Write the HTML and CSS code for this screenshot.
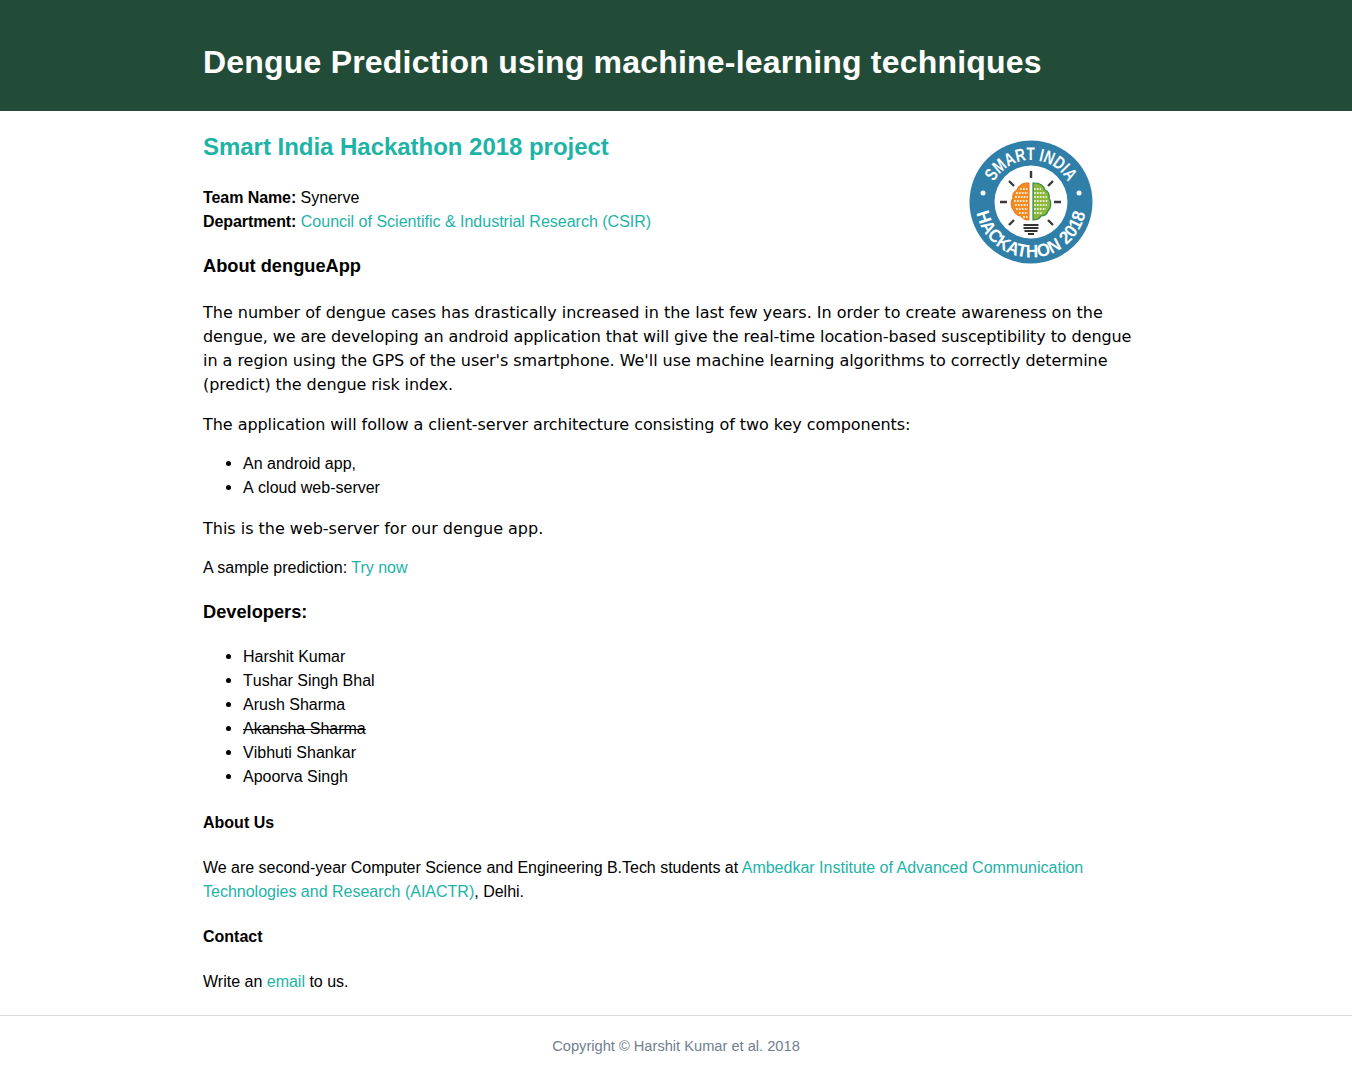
FILE: index.html
```html
<!DOCTYPE html>
<html lang="en">
<head>
<meta charset="utf-8">
<title>Dengue Prediction</title>
<link rel="stylesheet" href="styles.css">
</head>
<body>
<header class="banner">
  <h1 class="banner-title">Dengue Prediction using machine-learning techniques</h1>
</header>
<main class="content">
  <svg class="logo" viewBox="0 0 124 124" width="124" height="124" role="img" aria-label="Smart India Hackathon 2018">
    <defs>
      <path id="arc-top" d="M20 62a42 42 0 0 1 84 0"/>
      <path id="arc-bottom" d="M6.500 62a55.500 55.500 0 0 0 111 0"/>
    </defs>
    <circle cx="62" cy="62" r="61.500" fill="#2f7fa9"/>
    <circle cx="62" cy="62" r="36.500" fill="#fff"/>
    <text class="logo-text"><textPath href="#arc-top" startOffset="50%" text-anchor="middle" textLength="90" lengthAdjust="spacingAndGlyphs">SMART INDIA</textPath></text>
    <text class="logo-text"><textPath href="#arc-bottom" startOffset="50%" text-anchor="middle" textLength="152" lengthAdjust="spacingAndGlyphs">HACKATHON 2018</textPath></text>
    <circle cx="14" cy="53" r="2.500" fill="#fff"/>
    <circle cx="110" cy="53" r="2.500" fill="#fff"/>
    <path d="M62 31v7M40 41l5 5M84 41l-5 5M31 62h7M85 62h7M40 85l5-5M84 85l-5-5" stroke="#3a3a3a" stroke-width="2.400" fill="none"/>
    <path d="M60 43h-2c-5 0-9 3-10 7-3 1-5 5-4 8-3 4-2 10 1 13 1 3 4 5 7 5 1 2 3 4 8 4z" fill="#f28c20" stroke="#e8701a" stroke-width="1"/>
    <path d="M64 43h2c5 0 9 3 10 7 3 1 5 5 4 8 3 4 2 10-1 13-1 3-4 5-7 5-1 2-3 4-8 4z" fill="#8db63c" stroke="#2e8b47" stroke-width="1.200"/>
    <path class="bits" d="M51 49h8M47 53h12M46 57h13M45 61h14M46 65h13M47 69h12M50 73h9M54 77h5"/>
    <path class="bits" d="M65 49h7M65 53h11M65 57h13M65 61h14M65 65h13M65 69h12M65 73h8"/>
    <path d="M54.500 85h15M54.500 88h15M55.500 91h13M59 94h6" stroke="#333" stroke-width="2" fill="none"/>
  </svg>
  <h2 class="project-title">Smart India Hackathon 2018 project</h2>
  <p class="meta"><strong class="meta-label">Team Name:</strong> Synerve<br><strong class="meta-label">Department:</strong> <a href="#">Council of Scientific &amp; Industrial Research (CSIR)</a></p>
  <h3 class="section-title about-title">About dengueApp</h3>
  <p class="lead lead-long"><span class="line fit-a">The number of dengue cases has drastically increased in the last few years. In order to create awareness on the</span> <span class="line fit-b">dengue, we are developing an android application that will give the real-time location-based susceptibility to dengue</span> <span class="line fit-c">in a region using the GPS of the user's smartphone. We'll use machine learning algorithms to correctly determine</span> <span class="line fit-b">(predict) the dengue risk index.</span></p>
  <p class="lead fit-d">The application will follow a client-server architecture consisting of two key components:</p>
  <ul class="list">
    <li>An android app,</li>
    <li>A cloud web-server</li>
  </ul>
  <p class="lead fit-a">This is the web-server for our dengue app.</p>
  <p class="plain">A sample prediction: <a href="#">Try now</a></p>
  <h3 class="section-title dev-title">Developers:</h3>
  <ul class="list list-last">
    <li>Harshit Kumar</li>
    <li>Tushar Singh Bhal</li>
    <li>Arush Sharma</li>
    <li><s>Akansha Sharma</s></li>
    <li>Vibhuti Shankar</li>
    <li>Apoorva Singh</li>
  </ul>
  <h4 class="minor-title">About Us</h4>
  <p class="plain"><span class="tight">We are second-year Computer Science and Engineering B.Tech students at</span> <a href="#">Ambedkar Institute of Advanced Communication Technologies and Research (AIACTR)</a>, Delhi.</p>
  <h4 class="minor-title">Contact</h4>
  <p class="plain">Write an <a href="#">email</a> to us.</p>
</main>
<footer class="footer">Copyright © Harshit Kumar et al. 2018</footer>
</body>
</html>
```
FILE: styles.css
```css
* { box-sizing: border-box; }
html, body { margin: 0; padding: 0; }
body {
  font-family: "Liberation Sans", Arial, sans-serif;
  font-size: 16px;
  line-height: 24px;
  color: #000;
  background: #fff;
}
a { color: #1db3a6; text-decoration: none; }
.banner { background: #234c38; height: 111px; padding: 43px 203px 0; }
.banner-title { margin: 0; color: #fff; font-size: 32px; line-height: 38px; font-weight: 700; letter-spacing: .2px; }
.content { width: 946px; margin-left: 203px; padding-top: 21px; }
.logo { float: right; margin: 8px 56px 0 0; display: block; }
.logo-text { font-family: "Liberation Sans", Arial, sans-serif; font-size: 18px; font-weight: 700; fill: #fff; }
.bits { stroke: #fff; stroke-width: 1.300; stroke-dasharray: 1.800 1.100; fill: none; }
.project-title { margin: 0 0 24px; font-size: 24px; line-height: 30px; font-weight: 700; color: #1db3a6; letter-spacing: -.03px; }
.meta { margin: 0 0 20px; }
.meta-label { letter-spacing: -.08px; }
.section-title { margin: 0 0 20px; font-size: 18.240px; line-height: 24px; font-weight: 700; }
.about-title { margin-bottom: 23px; }
.dev-title { margin-bottom: 21px; }
.lead { margin: 0 0 15px; font-family: "DejaVu Sans", sans-serif; }
.lead-long { margin-bottom: 16px; }
.line { display: block; }
.fit-a { letter-spacing: -.015px; }
.fit-b { letter-spacing: -.088px; }
.fit-c { letter-spacing: -.036px; }
.fit-d { letter-spacing: -.054px; }
.plain { margin: 0 0 20px; }
.tight { letter-spacing: -.025px; }
.list { margin: 0 0 17px; padding-left: 40px; font-kerning: none; }
.list li::marker { font-family: "DejaVu Sans", sans-serif; }
.list-last { margin-bottom: 21px; }
.minor-title { margin: 0 0 21px; padding-top: 1px; font-size: 16px; line-height: 24px; font-weight: 700; }
.footer { border-top: 1px solid #d8dade; margin-top: 21px; padding-top: 18px; height: 63px; text-align: center; font-size: 14.650px; color: #708090; }
```
